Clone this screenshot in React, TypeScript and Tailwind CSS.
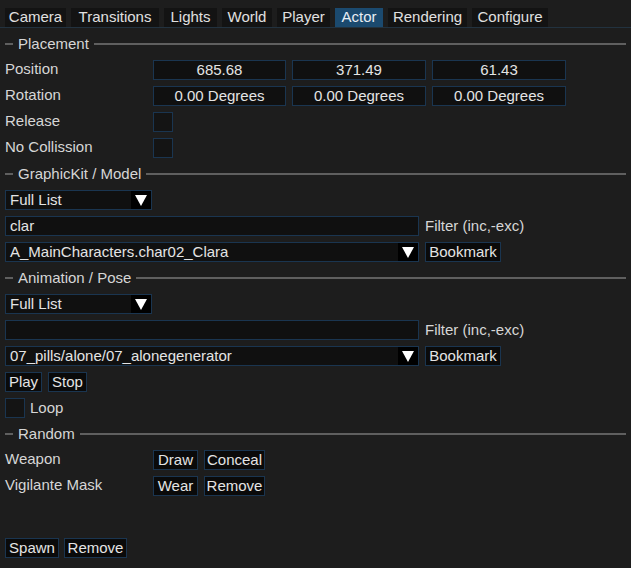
import React from "react";

const tabs: { name: string; w: string; active?: boolean }[] = [
  { name: "Camera", w: "w-[61px]" },
  { name: "Transitions", w: "w-[88px]" },
  { name: "Lights", w: "w-[53px]" },
  { name: "World", w: "w-[50px]" },
  { name: "Player", w: "w-[53px]" },
  { name: "Actor", w: "w-[48px]", active: true },
  { name: "Rendering", w: "w-[79px]" },
  { name: "Configure", w: "w-[76px]" },
];

function Header({ title }: { title: string }) {
  return (
    <div className="flex h-[20px] items-center">
      <div className="h-[2px] w-[8px] bg-[#5f5f5f]" />
      <span className="px-[5px] pb-[2px] text-[#d6d6d6]">{title}</span>
      <div className="h-[2px] flex-1 bg-[#5f5f5f]" />
    </div>
  );
}

function Field({ text, w, center }: { text: string; w: string; center?: boolean }) {
  return (
    <div
      className={`flex h-[20px] items-center border border-[#1a3550] bg-[#101010] px-[4px] pb-[2px] text-[#e4e4e4] ${w} ${
        center ? "justify-center" : ""
      }`}
    >
      {text}
    </div>
  );
}

function Combo({ text, w }: { text: string; w: string }) {
  return (
    <div className={`flex h-[20px] items-stretch border border-[#1a3550] bg-[#101010] text-[#e4e4e4] ${w}`}>
      <div className="flex flex-1 items-center px-[4px] pb-[2px]">{text}</div>
      <div className="flex w-[20px] items-center justify-center bg-black">
        <svg width="12" height="11" viewBox="0 0 12 11">
          <polygon points="0,0 12,0 6,11" fill="#ffffff" />
        </svg>
      </div>
    </div>
  );
}

function Btn({ text, w }: { text: string; w: string }) {
  return (
    <div
      className={`flex h-[20px] items-center justify-center border border-[#1a3550] bg-[#0a0a0a] pb-[2px] text-[#e4e4e4] ${w}`}
    >
      {text}
    </div>
  );
}

function Check() {
  return <div className="h-[20px] w-[20px] border border-[#1a3550] bg-[#141414]" />;
}

function Row({ label, children }: { label: string; children: React.ReactNode }) {
  return (
    <div className="flex h-[20px] items-center">
      <div className="w-[148px] pb-[4px] text-[#d6d6d6]">{label}</div>
      <div className="flex items-center gap-[6px]">{children}</div>
    </div>
  );
}

export default function App() {
  return (
    <div
      className="h-[568px] w-[631px] overflow-hidden bg-[#1d1d1d] text-[15px] leading-none"
      style={{ fontFamily: '"Liberation Sans", Arial, sans-serif' }}
    >
      <div className="flex gap-[5px] border-b border-[#22323f] px-[5px] pt-[8px]">
        {tabs.map((t) => (
          <div
            key={t.name}
            className={`flex h-[19px] items-center justify-center pb-[2px] ${t.w} ${
              t.active ? "bg-[#1b4a6f] text-[#e8eef4]" : "bg-[#131313] text-[#e0e0e0]"
            }`}
          >
            {t.name}
          </div>
        ))}
      </div>

      <div className="flex flex-col gap-[6px] px-[5px] pt-[6px]">
        <Header title="Placement" />
        <Row label="Position">
          <Field text="685.68" w="w-[133px]" center />
          <Field text="371.49" w="w-[134px]" center />
          <Field text="61.43" w="w-[134px]" center />
        </Row>
        <Row label="Rotation">
          <Field text="0.00 Degrees" w="w-[133px]" center />
          <Field text="0.00 Degrees" w="w-[134px]" center />
          <Field text="0.00 Degrees" w="w-[134px]" center />
        </Row>
        <Row label="Release">
          <Check />
        </Row>
        <Row label="No Collission">
          <Check />
        </Row>

        <Header title="GraphicKit / Model" />
        <Combo text="Full List" w="w-[147px]" />
        <div className="flex h-[20px] items-center gap-[6px]">
          <Field text="clar" w="w-[414px]" />
          <span className="pb-[2px] text-[#d6d6d6]">Filter (inc,-exc)</span>
        </div>
        <div className="flex h-[20px] items-center gap-[6px]">
          <Combo text="A_MainCharacters.char02_Clara" w="w-[414px]" />
          <Btn text="Bookmark" w="w-[76px]" />
        </div>

        <Header title="Animation / Pose" />
        <Combo text="Full List" w="w-[147px]" />
        <div className="flex h-[20px] items-center gap-[6px]">
          <Field text="" w="w-[414px]" />
          <span className="pb-[2px] text-[#d6d6d6]">Filter (inc,-exc)</span>
        </div>
        <div className="flex h-[20px] items-center gap-[6px]">
          <Combo text="07_pills/alone/07_alonegenerator" w="w-[414px]" />
          <Btn text="Bookmark" w="w-[76px]" />
        </div>
        <div className="flex h-[20px] items-center gap-[6px]">
          <Btn text="Play" w="w-[37px]" />
          <Btn text="Stop" w="w-[39px]" />
        </div>
        <div className="flex h-[20px] items-center gap-[5px]">
          <Check />
          <span className="pb-[2px] text-[#d6d6d6]">Loop</span>
        </div>

        <Header title="Random" />
        <Row label="Weapon">
          <Btn text="Draw" w="w-[45px]" />
          <Btn text="Conceal" w="w-[61px]" />
        </Row>
        <Row label="Vigilante Mask">
          <Btn text="Wear" w="w-[45px]" />
          <Btn text="Remove" w="w-[61px]" />
        </Row>
        <div className="mt-[36px] flex h-[20px] items-center gap-[5px]">
          <Btn text="Spawn" w="w-[54px]" />
          <Btn text="Remove" w="w-[63px]" />
        </div>
      </div>
    </div>
  );
}
